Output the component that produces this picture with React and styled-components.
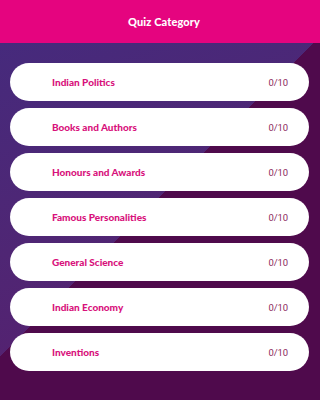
import React from "react";
import styled, { createGlobalStyle } from "styled-components";

const Global = createGlobalStyle`
  html, body { margin: 0; padding: 0; }
  body { font-family: "Lato", "Noto Sans", sans-serif; }
  * { box-sizing: border-box; }
`;

const Page = styled.div`
  display: flex;
  flex-direction: column;
  min-height: 100vh;
  width: 100%;
`;

const Header = styled.header`
  height: 43px;
  flex: none;
  background: #e5047f;
  display: flex;
  align-items: center;
  justify-content: center;
`;

const Title = styled.h1`
  margin: 0 0 0 8px;
  color: #fff;
  font-family: "Lato", sans-serif;
  font-weight: 900;
  font-size: 11px;
  letter-spacing: 0.1px;
`;

const Body = styled.main`
  flex: 1;
  display: flex;
  flex-direction: column;
  gap: 7px;
  padding: 20px 11px 20px 10px;
  background:
    linear-gradient(135deg, transparent 222px, #4f0a4c 222px),
    linear-gradient(160deg, #462a7c 0%, #4f2674 45%, #5a1d6c 100%);
`;

const Card = styled.button`
  height: 38px;
  border: none;
  border-radius: 19px;
  background: #ffffff;
  display: flex;
  align-items: center;
  justify-content: space-between;
  padding: 0 21px 0 42px;
  font: inherit;
  cursor: pointer;
`;

const Name = styled.span`
  color: #d8127c;
  font-family: "Lato", sans-serif;
  font-weight: 900;
  font-size: 10px;
`;

const Score = styled.span`
  color: #8c2a5c;
  font-family: "Roboto", sans-serif;
  font-weight: 400;
  font-size: 9.5px;
  letter-spacing: -0.1px;
`;

const categories = [
  "Indian Politics",
  "Books and Authors",
  "Honours and Awards",
  "Famous Personalities",
  "General Science",
  "Indian Economy",
  "Inventions",
];

export default function App() {
  return (
    <>
      <Global />
      <Page>
        <Header>
          <Title>Quiz Category</Title>
        </Header>
        <Body>
          {categories.map((c) => (
            <Card key={c}>
              <Name>{c}</Name>
              <Score>0/10</Score>
            </Card>
          ))}
        </Body>
      </Page>
    </>
  );
}
